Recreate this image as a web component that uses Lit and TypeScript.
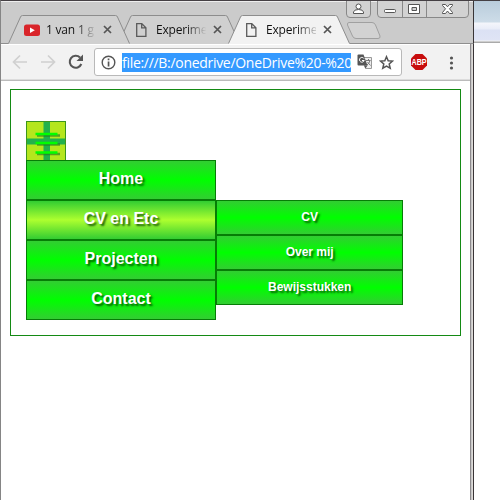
import { LitElement, html, css, svg } from "lit";
import { customElement, property } from "lit/decorators.js";

@customElement("browser-tab")
class BrowserTab extends LitElement {
  @property() label = "";
  @property() icon = "page";
  @property({ type: Boolean, reflect: true }) active = false;

  static styles = css`
    :host { position: relative; display: block; width: 123px; height: 29px; margin-right: -13px; flex: none; z-index: 1; }
    :host([active]) { z-index: 3; }
    :host([icon="video"]) { z-index: 2; }
    .shape { position: absolute; inset: 0; }
    .row { position: relative; display: flex; align-items: center; height: 29px; padding-left: 16px; }
    .icon { width: 16px; height: 16px; flex: none; margin-right: 6px; }
    .label { width: 50px; font: 12px/20px "Open Sans", "Noto Sans", sans-serif; letter-spacing: -0.2px; white-space: nowrap;
      color: transparent; background: linear-gradient(90deg, #111 60%, #ccc 100%); -webkit-background-clip: text; background-clip: text; }
    .close { width: 9px; height: 9px; margin-left: 7px; }
  `;

  render() {
    const fill = this.active ? "#f2f2f2" : "#d0d0d0";
    return html`
      <svg class="shape" width="123" height="29">
        <path d="M0 29 L.5 28.5 L12.500 2 Q13 .5 14.500 .5 H107.500 Q109 .5 109.500 2 L121.500 28.5 L122 29Z" fill=${fill}></path>
        <path d="M.5 28.5 L12.500 2 Q13 .5 14.500 .5 H107.500 Q109 .5 109.500 2 L121.500 28.5" fill="none" stroke="#8d8d8d"></path>
      </svg>
      <div class="row">
        <svg class="icon" viewBox="0 0 16 16">
          ${this.icon === "video"
            ? svg`<rect x="0" y="2.500" width="16" height="11.500" rx="2.500" fill="#d9252a"></rect><path d="M6 5.600 L10.800 8.200 L6 10.900Z" fill="#fff"></path>`
            : svg`<path d="M2.700 1.600 H7.800 L11.900 5.800 V14.400 H2.700Z M7.700 1.600 V5.900 H11.900" fill="none" stroke="#5a5a5a" stroke-width="1.300"></path>`}
        </svg>
        <div class="label">${this.label}</div>
        <svg class="close" viewBox="0 0 9 9"><path d="M1 1 L8 8 M8 1 L1 8" stroke="#555" stroke-width="1.700"></path></svg>
      </div>`;
  }
}

@customElement("app-root")
class AppRoot extends LitElement {
  static styles = css`
    :host { display: block; width: 500px; height: 500px; overflow: hidden; background: #fff; }
    * { box-sizing: border-box; }
    .desk { display: flex; height: 500px; }
    .window { width: 474px; display: flex; flex-direction: column; border-left: 1px solid #858585; border-top: 1px solid #454044; position: relative; }
    .body { flex: 1; display: flex; flex-direction: column; }
    .frame { position: absolute; top: 43px; right: 0; bottom: 0; width: 4px; background: linear-gradient(90deg, #8d8a8d 1px, #c9c9c9 1px 2px, #dedbd8 2px 3px, #393537 3px); }
    .strip { height: 43px; background: linear-gradient(#eee 1px, #cbcbcb 1px); border-bottom: 1px solid #8f8f8f; border-right: 1px solid #393537; position: relative; display: flex; padding: 14px 0 0 7px; }
    .newtab { margin: 7px 0 0 8px; flex: none; }
    .controls { position: absolute; top: 0; right: 4px; display: flex; gap: 6px; }
    .toolbar { height: 35px; width: 469px; background: #f2f2f2; border-top: 1px solid #fff; display: flex; align-items: center; }
    .edge { height: 2px; width: 469px; background: linear-gradient(#dcdcdc 1px, #bbb 1px); }
    .nav { margin-left: 11px; flex: none; }
    .omni { width: 308px; height: 28px; margin-left: 9px; border: 1px solid #b9b9b9; border-radius: 3px; background: #fff; display: flex; align-items: center; flex: none; }
    .info { margin: 0 6px 0 6px; flex: none; }
    .url { width: 229px; height: 19px; background: #3399ff; color: #fff; font: 14px/19px "Open Sans", "Noto Sans", sans-serif; letter-spacing: -0.3px; white-space: nowrap; flex: none; }
    .translate { margin-left: 6px; flex: none; }
    .star { margin-left: 6px; flex: none; }
    .abp { margin-left: 8px; flex: none; }
    .more { margin-left: 21px; flex: none; }
    .behind { flex: 1; background: linear-gradient(#454044 1px, #b9ccdb 1px, #cddce8 22px, #f4f6fb 23px, #e9edf8 29px, #dbe1f4 30px, #dfe4f5 40px, #f4f4f4 41px, #aaa 42px, #aaa 43px, #fff 43px); }
    .page { margin: 8px 0 0 9px; width: 451px; height: 247px; border: 1px solid #148a14; padding: 31px 0 0 15px; font-family: "Liberation Sans", Arial, sans-serif; }
    .toggle { width: 40px; height: 40px; display: block; }
    .menus { display: flex; align-items: flex-start; margin-top: -1px; }
    .menu { width: 190px; }
    .sub { width: 187.4px; margin-top: 40px; }
    .item { height: 40px; border: 1px solid #067d06; background: linear-gradient(#32cd32, #00ff00 50%, #32cd32); color: #fff; font-size: 16px; line-height: 36px; font-weight: bold; text-align: center; text-shadow: 2px 2px 2px rgba(0, 60, 0, .8); }
    .hover { background: linear-gradient(#32cd32, #adff2f 50%, #32cd32); }
    .small { height: 35px; font-size: 12px; line-height: 32px; }
  `;

  render() {
    return html`
      <div class="desk">
        <div class="window">
          <div class="strip">
            <browser-tab icon="video" label="1 van 1 g"></browser-tab>
            <browser-tab label="Experime"></browser-tab>
            <browser-tab active label="Experime"></browser-tab>
            <svg class="newtab" width="36" height="18"><path d="M3 .5 H26 Q28.500 .5 29.500 3 L34 14 Q34.500 16.500 32 16.500 H10 Q7.500 16.500 6.500 14 L1.500 3 Q1 .5 3 .5Z" fill="#d2d2d2" stroke="#a0a0a0"></path></svg>
            <div class="controls">
              <svg width="25" height="17" fill="none" stroke="#888">
                <path d="M.5 0 V13 Q.5 16.500 4 16.500 H21 Q24.500 16.500 24.500 13 V0" fill="#d2d2d2"></path>
                <g stroke="#555"><circle cx="12.500" cy="5.500" r="2.500" fill="#fff"></circle><path d="M7.500 12.500 V11 Q8 8.500 12.500 8.500 T17.500 11 V12.500Z" fill="#fff"></path></g>
              </svg>
              <svg width="92" height="17" fill="none" stroke="#888">
                <path d="M.5 0 V13 Q.5 16.500 4 16.500 H88 Q91.500 16.500 91.500 13 V0 M25.500 0 V16 M49.500 0 V16" fill="#d2d2d2"></path>
                <rect x="7.500" y="8.500" width="11" height="3" rx="1" stroke="#555" fill="#fff"></rect>
                <path d="M31.500 3.500 H42.500 V12.500 H31.500Z M35 6.500 V9.500 H39.500 V6.500Z" fill="#fff" fill-rule="evenodd" stroke="#555"></path>
                <path d="M65.500 3.500 H68.500 L70.500 5.800 L72.500 3.500 H75.500 V4.500 L72.500 7.800 L75.500 11.500 V12.500 H72.500 L70.500 10 L68.500 12.500 H65.500 V11.500 L68.500 7.800 L65.500 4.500Z" stroke="#555" fill="#fff"></path>
              </svg>
            </div>
          </div>
          <div class="body">
            <div class="toolbar">
              <svg class="nav" width="73" height="18" fill="none">
                <path d="M15 9 H2 M8 2.500 L1.500 9 L8 15.500 M29 9 H42 M36 2.500 L42.500 9 L36 15.500" stroke="#d0d0d0" stroke-width="1.700"></path>
                <path d="M68 4.500 A6 6 0 1 0 69.300 11" stroke="#555" stroke-width="2.100"></path>
                <path d="M71 1.500 V8 H64.500Z" fill="#555"></path>
              </svg>
              <div class="omni">
                <svg class="info" width="15" height="15"><circle cx="7.500" cy="7.500" r="6.300" fill="none" stroke="#555" stroke-width="1.400"></circle><path d="M6.700 3.600h1.700v1.700h-1.700z M6.700 6.500h1.700v5h-1.700z" fill="#555"></path></svg>
                <div class="url">file:///B:/onedrive/OneDrive%20-%20</div>
                <svg class="translate" width="16" height="16">
                  <path d="M6 3.500 H14.500 V14.500 H8.500Z" fill="#eee" stroke="#999"></path>
                  <path d="M1.500 .5 H6.500 L10.500 11.500 H1.500 Q.5 11.500 .5 10.500 V1.500 Q.5 .5 1.500 .5Z" fill="#555"></path>
                  <path d="M7 4.600 A2.400 2.400 0 1 0 7.200 6.500 H5" fill="none" stroke="#fff"></path>
                  <path d="M9 6.500 H13.500 M11.500 5 V6.500 M13 6.500 Q12.500 9 10 11 M10.500 8 L13.500 11.500" fill="none" stroke="#777"></path>
                  <path d="M7 11.500 H10.500 L8.500 14.500Z" fill="#555"></path>
                </svg>
                <svg class="star" width="15" height="15"><path d="M7.500 1.700 L9.200 5.700 L13.500 6.100 L10.200 9 L11.200 13.200 L7.500 11 L3.800 13.200 L4.800 9 L1.500 6.100 L5.800 5.700Z" fill="none" stroke="#555" stroke-width="1.500"></path></svg>
              </div>
              <svg class="abp" width="18" height="18">
                <path d="M5.500 1 H12.500 L17 5.500 V12.500 L12.500 17 H5.500 L1 12.500 V5.500Z" fill="#c70d0d"></path>
                <text x="9" y="12" text-anchor="middle" textLength="15" lengthAdjust="spacingAndGlyphs" font-family="Liberation Sans, Arial, sans-serif" font-size="8.500" font-weight="bold" fill="#fff">ABP</text>
              </svg>
              <svg class="more" width="5" height="15" fill="#555"><circle cx="2.500" cy="3" r="1.600"></circle><circle cx="2.500" cy="8" r="1.600"></circle><circle cx="2.500" cy="13" r="1.600"></circle></svg>
            </div>
            <div class="edge"></div>
            <main class="page">
              <svg class="toggle" viewBox="0 0 40 40">
                <rect width="40" height="40" fill="#b5e61d"></rect>
                <path d="M17.500 0 H24 V40 H17.500Z M0 17.500 H40 V23.500 H0Z" fill="#22b14c"></path>
                <rect x=".5" y=".5" width="39" height="39" fill="none" stroke="#3c961c"></rect>
                <path d="M11 14.500 H34 M11 23.500 H34 M11 33 H34" stroke="#247d20" stroke-opacity=".65" stroke-width="2.500"></path>
                <path d="M9.500 13 H31.500 M9.500 22 H31.500 M9.500 31.500 H31.500" stroke="#0f0" stroke-width="2.700"></path>
              </svg>
              <div class="menus">
                <nav class="menu">
                  <div class="item">Home</div>
                  <div class="item hover">CV en Etc</div>
                  <div class="item">Projecten</div>
                  <div class="item">Contact</div>
                </nav>
                <nav class="sub">
                  <div class="item small">CV</div>
                  <div class="item small">Over mij</div>
                  <div class="item small">Bewijsstukken</div>
                </nav>
              </div>
            </main>
          </div>
          <div class="frame"></div>
        </div>
        <div class="behind"></div>
      </div>`;
  }
}
